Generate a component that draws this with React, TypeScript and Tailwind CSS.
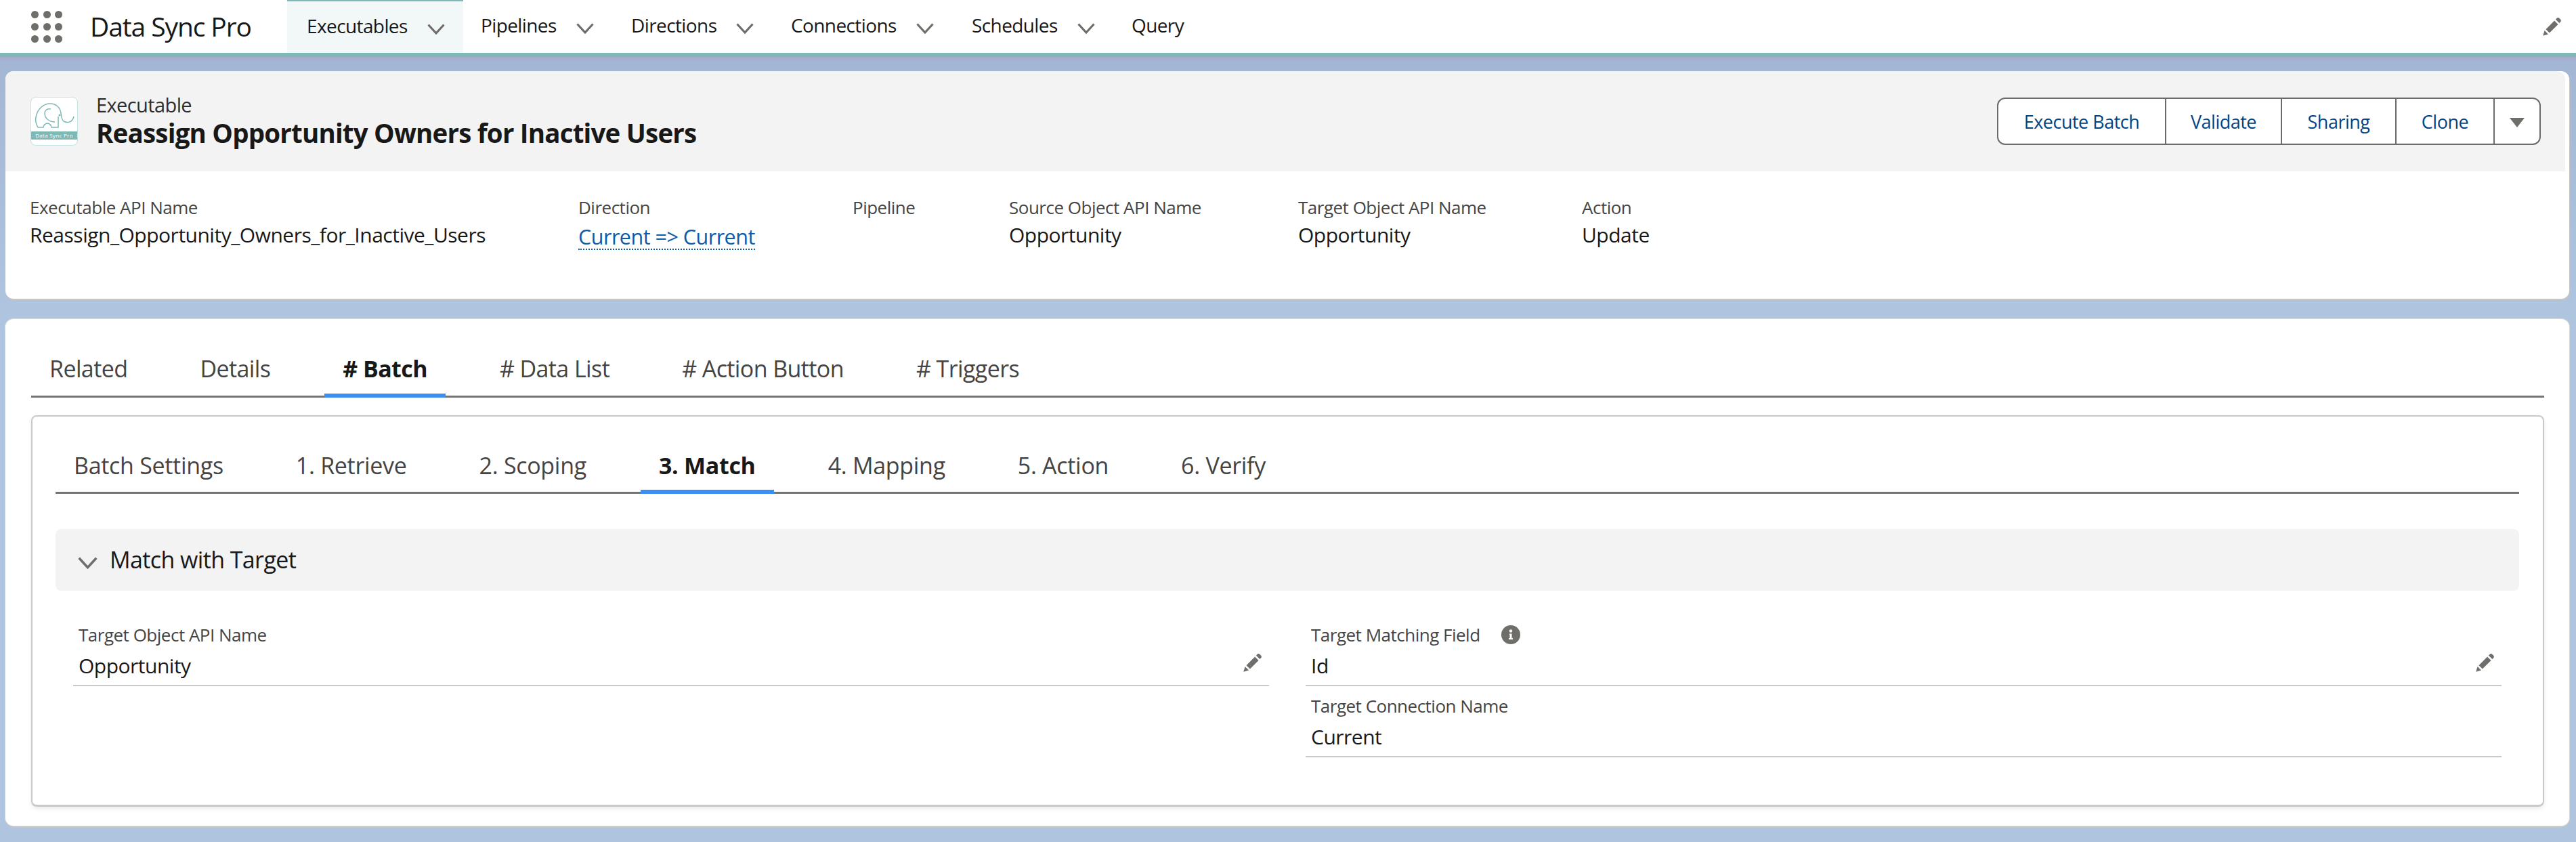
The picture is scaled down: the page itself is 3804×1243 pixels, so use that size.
const SANS = "font-['Open_Sans',sans-serif]";

function Pencil({ className }: { className: string }) {
  return (
    <svg viewBox="0 0 24 24" className={className} fill="#706e6b">
      <path d="M1 23l2-6.5L7.5 21z" />
      <path d="M4.5 15L15 4.5 19.5 9 9 19.5z" />
      <path d="M16.5 3L18 1.5c.8-.8 2-.8 2.8 0l1.7 1.7c.8.8.8 2 0 2.8L21 7.5z" />
    </svg>
  );
}

function Chevron({ className }: { className: string }) {
  return (
    <svg viewBox="0 0 26 16" className={className} fill="none" stroke="#706e6b" strokeWidth="3.2">
      <path d="M1.5 1.5L13 14 24.5 1.5" />
    </svg>
  );
}

function Logo() {
  return (
    <div className="w-[70px] h-[72px] rounded-lg border border-[#bfe3e0] bg-white overflow-hidden shrink-0">
      <svg viewBox="0 0 68 50" className="w-[68px] h-[50px]" fill="none" stroke="#7fb9b7" strokeWidth="1.5">
        <path d="M10 44C7 39 6 34 7 29 9 17 18 9 28 9c9 0 15 6 16 14 1 6 1 10 4 12 5 3 13 2 15-7" />
        <path d="M10 44h8c0-3 3-6 6-6s6 3 6 6h10V28" />
        <path d="M35 36c-8 0-15-5-15-13 0-4 4-7 9-6" />
        <circle cx="42" cy="26" r="0.8" fill="#7fb9b7" />
      </svg>
      <div className="h-[12px] bg-[#7fb9b7] text-white text-[8px] tracking-[0.3px] text-center leading-[12px]">Data Sync Pro</div>
    </div>
  );
}

function NavItem({ label, width }: { label: string; width: string }) {
  return (
    <div className={`${width} h-[78px] flex items-center gap-[29px]`}>
      <span className="text-[28px] tracking-[-0.6px] text-[#181818] mb-[4px]">{label}</span>
      {label !== "Query" && <Chevron className="w-[26px] h-[16px] mt-[6px]" />}
    </div>
  );
}

function Meta({ label, value, width, link }: { label: string; value: string; width: string; link?: boolean }) {
  return (
    <div className={width}>
      <div className="text-[26px] leading-[32px] tracking-[-0.5px] text-[#444444]">{label}</div>
      {value && (
        <div className={link ? "mt-[9px] leading-[36px] text-[30.5px] tracking-[-0.5px] text-[#0b5cab] inline-block border-b-2 border-dotted border-[#0b5cab]" : "mt-[7px] leading-[36px] text-[30px] tracking-[-0.5px] text-[#181818]"}>{value}</div>
      )}
    </div>
  );
}

function Tab({ label, active, inner }: { label: string; active?: boolean; inner?: boolean }) {
  return (
    <div className={active ? "px-[27px] -mb-[3px] pb-[11px] flex items-center border-b-[6px] border-[#3b8ff3] font-bold text-[#181818]" : "px-[27px] pb-[14px] flex items-center text-[#444444]"}>
      <span className={inner ? "text-[34px] tracking-[-0.3px] whitespace-nowrap" : "text-[34px] tracking-[-0.6px] whitespace-nowrap"}>{label}</span>
    </div>
  );
}

function Field({ label, value, edit, info }: { label: string; value: string; edit?: boolean; info?: boolean }) {
  return (
    <div className="h-[105px] border-b-2 border-[#c9c9c9] px-[8px] pt-[14px] relative">
      <div className="flex items-center gap-[31px] h-[30px]">
        <span className="text-[26px] tracking-[-0.5px] text-[#444444]">{label}</span>
        {info && (
          <svg viewBox="0 0 28 28" className="w-[28px] h-[28px]">
            <circle cx="14" cy="14" r="14" fill="#706e6b" />
            <circle cx="14" cy="8.5" r="2.2" fill="#ffffff" />
            <path d="M12 12.5h3.5V19H17v2h-6v-2h1.5v-4.5H12z" fill="#ffffff" />
          </svg>
        )}
      </div>
      <div className="mt-[13px] text-[30px] leading-[36px] tracking-[-0.5px] text-[#181818]">{value}</div>
      {edit && <Pencil className="absolute right-[10px] top-[56px] w-[29px] h-[29px]" />}
    </div>
  );
}

export default function App() {
  return (
    <div className={`${SANS} w-[3804px] h-[1243px] overflow-hidden bg-[linear-gradient(#a9aacd_84px,#a3b7d4_92px,#aec4df_460px)]`}>
      <nav className="h-[84px] bg-white border-b-[6px] border-[#7fb9b7] flex items-start pl-[46px]">
        <div className="w-[46px] h-[78px] grid grid-cols-3 gap-x-[7px] gap-y-[7px] content-center">
          {[0, 1, 2, 3, 4, 5, 6, 7, 8].map((i) => (
            <span key={i} className="w-[11px] h-[11px] rounded-full bg-[#706e6b]" />
          ))}
        </div>
        <div className="ml-[41px] w-[291px] h-[78px] flex items-center text-[39px] tracking-[-1.1px] text-[#181818]">Data Sync Pro</div>
        <div className="w-[260px] h-[78px] flex items-center gap-[29px] pl-[29px] bg-[#f2f7f7] border-t-2 border-[#7fb9b7]">
          <span className="text-[28px] tracking-[-0.6px] text-[#181818] mb-[4px]">Executables</span>
          <Chevron className="w-[26px] h-[16px] mt-[6px]" />
        </div>
        <div className="flex ml-[26px]">
          <NavItem label="Pipelines" width="w-[222px]" />
          <NavItem label="Directions" width="w-[236px]" />
          <NavItem label="Connections" width="w-[267px]" />
          <NavItem label="Schedules" width="w-[236px]" />
          <NavItem label="Query" width="w-[100px]" />
        </div>
        <div className="ml-auto mr-[21px] h-[78px] flex items-center">
          <Pencil className="w-[29px] h-[29px]" />
        </div>
      </nav>

      <section className="mt-[21px] ml-[8px] mr-[10px] h-[336px] bg-white rounded-xl shadow-[1px_2px_0_#c9c5c0]">
        <div className="h-[148px] mr-[6px] bg-[#f3f3f3] rounded-t-xl flex items-center pl-[37px] pr-[36px]">
          <Logo />
          <div className="ml-[27px] mb-[2px]">
            <div className="text-[29px] leading-[36px] tracking-[-0.6px] text-[#2e2e2e]">Executable</div>
            <div className="text-[38.5px] leading-[46px] font-bold tracking-[-0.8px] text-[#181818]">Reassign Opportunity Owners for Inactive Users</div>
          </div>
          <div className="ml-auto h-[70px] flex border-2 border-[#6b6b6b] rounded-xl bg-white overflow-hidden text-[27px] tracking-[-0.5px] text-[#014486]">
            <div className="w-[248px] pt-[2px] flex items-center justify-center border-r-2 border-[#6b6b6b]">Execute Batch</div>
            <div className="w-[171px] pt-[2px] flex items-center justify-center border-r-2 border-[#6b6b6b]">Validate</div>
            <div className="w-[169px] pt-[2px] flex items-center justify-center border-r-2 border-[#6b6b6b]">Sharing</div>
            <div className="w-[145px] pt-[2px] flex items-center justify-center border-r-2 border-[#6b6b6b]">Clone</div>
            <div className="w-[66px] pt-[3px] flex items-center justify-center">
              <svg viewBox="0 0 24 14" className="w-[24px] h-[14px]"><path d="M1 0h22L12 14z" fill="#706e6b" /></svg>
            </div>
          </div>
        </div>
        <div className="flex pl-[36px] pt-[37px]">
          <Meta label="Executable API Name" value="Reassign_Opportunity_Owners_for_Inactive_Users" width="w-[810px]" />
          <Meta label="Direction" value="Current => Current" width="w-[405px]" link />
          <Meta label="Pipeline" value="" width="w-[231px]" />
          <Meta label="Source Object API Name" value="Opportunity" width="w-[427px]" />
          <Meta label="Target Object API Name" value="Opportunity" width="w-[419px]" />
          <Meta label="Action" value="Update" width="w-[200px]" />
        </div>
      </section>

      <section className="mt-[30px] ml-[8px] mr-[10px] h-[748px] bg-white rounded-xl shadow-[0_0_0_1px_#d8d8d8,1px_2px_0_#c9c5c0] pl-[38px] pr-[37px] pt-[48px]">
        <div className="h-[68px] flex gap-[53px] border-b-[3px] border-[#747474]">
          <Tab label="Related" />
          <Tab label="Details" />
          <Tab label="# Batch" active />
          <Tab label="# Data List" />
          <Tab label="# Action Button" />
          <Tab label="# Triggers" />
        </div>
        <div className="mt-[26px] h-[578px] rounded-lg border-2 border-[#c9c9c9] border-b-[3px] pl-[34px] pr-[35px] pt-[48px] shadow-[0_3px_6px_rgba(0,0,0,0.08)]">
          <div className="h-[66px] flex gap-[53px] border-b-[3px] border-[#747474]">
            <Tab inner label="Batch Settings" />
            <Tab inner label="1. Retrieve" />
            <Tab inner label="2. Scoping" />
            <Tab inner label="3. Match" active />
            <Tab inner label="4. Mapping" />
            <Tab inner label="5. Action" />
            <Tab inner label="6. Verify" />
          </div>
          <div className="mt-[52px] h-[91px] bg-[#f3f3f3] rounded-lg flex items-center pl-[33px] gap-[18px]">
            <Chevron className="w-[29px] h-[18px] mt-[8px]" />
            <span className="text-[34px] tracking-[-0.6px] text-[#181818]">Match with Target</span>
          </div>
          <div className="mt-[36px] flex gap-[54px] pl-[26px]">
            <div className="w-[1766px]">
              <Field label="Target Object API Name" value="Opportunity" edit />
            </div>
            <div className="w-[1766px]">
              <Field label="Target Matching Field" value="Id" edit info />
              <Field label="Target Connection Name" value="Current" />
            </div>
          </div>
        </div>
      </section>
    </div>
  );
}
